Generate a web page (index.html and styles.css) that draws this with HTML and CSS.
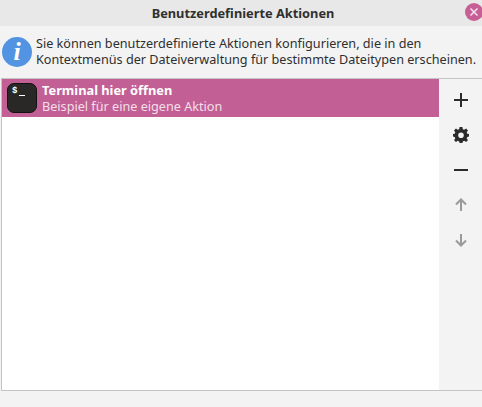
FILE: index.html
```html
<!DOCTYPE html>
<html>
<head>
    <meta charset="utf-8" />
    <title>Benutzerdefinierte Aktionen</title>
    <link rel="stylesheet" href="styles.css">
</head>
<body>
    <div class="titelleiste">
        <b>Benutzerdefinierte Aktionen</b>
        <div class="schliessen">
            <svg width="10" height="10" viewBox="0 0 10 10"><path d="M1.5 1.5L8.5 8.5M8.5 1.5L1.5 8.5" stroke="#f6e6ee" stroke-width="1.5" fill="none"/></svg>
        </div>
    </div>

    <div class="info">
        <div class="infoIcono">i</div>
        <div class="infoTexto">Sie können benutzerdefinierte Aktionen konfigurieren, die in den<br />Kontextmenüs der Dateiverwaltung für bestimmte Dateitypen erscheinen.</div>
    </div>

    <div class="marco">
        <div class="lista">
            <div class="fila">
                <div class="terminal"><span class="prompt">$</span><span class="cursor"></span></div>
                <div class="filaTexto">
                    <b>Terminal hier öffnen</b>
                    <span>Beispiel für eine eigene Aktion</span>
                </div>
            </div>
        </div>
        <div class="botones">
            <div class="boton">
                <svg width="16" height="16" viewBox="0 0 16 16"><path d="M8 1V15M1 8H15" stroke="#2b2b2b" stroke-width="2" fill="none"/></svg>
            </div>
            <div class="boton">
                <svg width="16" height="16" viewBox="0 0 16 16"><path fill="#2b2b2b" fill-rule="evenodd" d="M6.6 0H9.4L9.8 2.2 11.2 2.8 13.1 1.5 15 3.4 13.7 5.3 14.3 6.7 16 7V9.6L14.3 10 13.7 11.4 15 13.1 13.1 15 11.2 13.8 9.8 14.4 9.4 16H6.6L6.2 14.4 4.8 13.8 2.9 15 1 13.1 2.3 11.4 1.7 10 0 9.6V7L1.7 6.7 2.3 5.3 1 3.4 2.9 1.5 4.8 2.8 6.2 2.2ZM8 5.4A2.8 2.8 0 1 0 8 11 2.8 2.8 0 1 0 8 5.4Z"/></svg>
            </div>
            <div class="boton">
                <svg width="16" height="16" viewBox="0 0 16 16"><path d="M1 8H15" stroke="#2b2b2b" stroke-width="2" fill="none"/></svg>
            </div>
            <div class="boton">
                <svg width="16" height="16" viewBox="0 0 16 16"><path d="M8 14V3M3 7.5L8 2.5 13 7.5" stroke="#9a9a9a" stroke-width="2" fill="none"/></svg>
            </div>
            <div class="boton">
                <svg width="16" height="16" viewBox="0 0 16 16"><path d="M8 2V13M3 8.5L8 13.5 13 8.5" stroke="#9a9a9a" stroke-width="2" fill="none"/></svg>
            </div>
        </div>
    </div>
</body>
</html>
```

FILE: styles.css
```css
html, body {
    height: 100%;
}
body {
    margin: 0;
    display: flex;
    flex-direction: column;
    background-color: #f3f3f3;
    color: #2f2f2f;
    font-family: "Noto Sans", sans-serif;
    font-size: 12.65px;
    overflow: hidden;
}
.titelleiste {
    height: 26px;
    flex: none;
    display: flex;
    align-items: center;
    justify-content: center;
    position: relative;
    box-sizing: border-box;
    padding-left: 4px;
    background-color: #e8e8e8;
    font-size: 12.8px;
}
.titelleiste b {
    color: #303030;
}
.schliessen {
    position: absolute;
    top: 3px;
    right: -1px;
    width: 18px;
    height: 18px;
    border-radius: 50%;
    background-color: #c75f96;
    display: flex;
    align-items: center;
    justify-content: center;
}
.info {
    height: 52px;
    flex: none;
    display: flex;
    align-items: center;
    padding-left: 2px;
    padding-bottom: 2px;
    box-sizing: border-box;
}
.infoIcono {
    width: 30px;
    height: 30px;
    flex: none;
    border-radius: 50%;
    background-color: #5294e2;
    color: #ffffff;
    font-family: "Liberation Serif", serif;
    font-style: italic;
    font-weight: bold;
    font-size: 26px;
    line-height: 30px;
    text-align: center;
    margin-right: 4px;
    margin-top: 2px;
}
.infoTexto {
    line-height: 16px;
    white-space: nowrap;
}
.marco {
    height: 313px;
    flex: none;
    margin-left: 1px;
    display: flex;
    box-sizing: border-box;
    border-top: 1px solid #c4c4c4;
    border-bottom: 1px solid #c4c4c4;
    border-left: 1px solid #c4c4c4;
}
.lista {
    width: 437px;
    background-color: #ffffff;
}
.fila {
    height: 38px;
    display: flex;
    align-items: center;
    background-color: #c26095;
    color: #ffffff;
}
.terminal {
    width: 30px;
    height: 30px;
    margin-left: 5px;
    margin-right: 5px;
    flex: none;
    box-sizing: border-box;
    border-radius: 7px;
    border: 1px solid #111111;
    background-color: #2a2827;
    padding: 2px 0 0 4px;
    display: flex;
    align-items: flex-start;
    gap: 2px;
}
.prompt {
    font-family: "Liberation Mono", monospace;
    font-size: 9px;
    font-weight: bold;
    line-height: 10px;
}
.cursor {
    width: 6px;
    height: 1px;
    margin-top: 9px;
    background-color: #ffffff;
}
.filaTexto {
    display: flex;
    flex-direction: column;
    line-height: 16px;
}
.filaTexto b {
    font-size: 12.8px;
}
.filaTexto span {
    color: #f3dfe9;
}
.botones {
    flex: 1;
    display: flex;
    flex-direction: column;
    align-items: center;
    padding-top: 3px;
}
.boton {
    height: 35px;
    display: flex;
    align-items: center;
    justify-content: center;
    flex: none;
}
```
